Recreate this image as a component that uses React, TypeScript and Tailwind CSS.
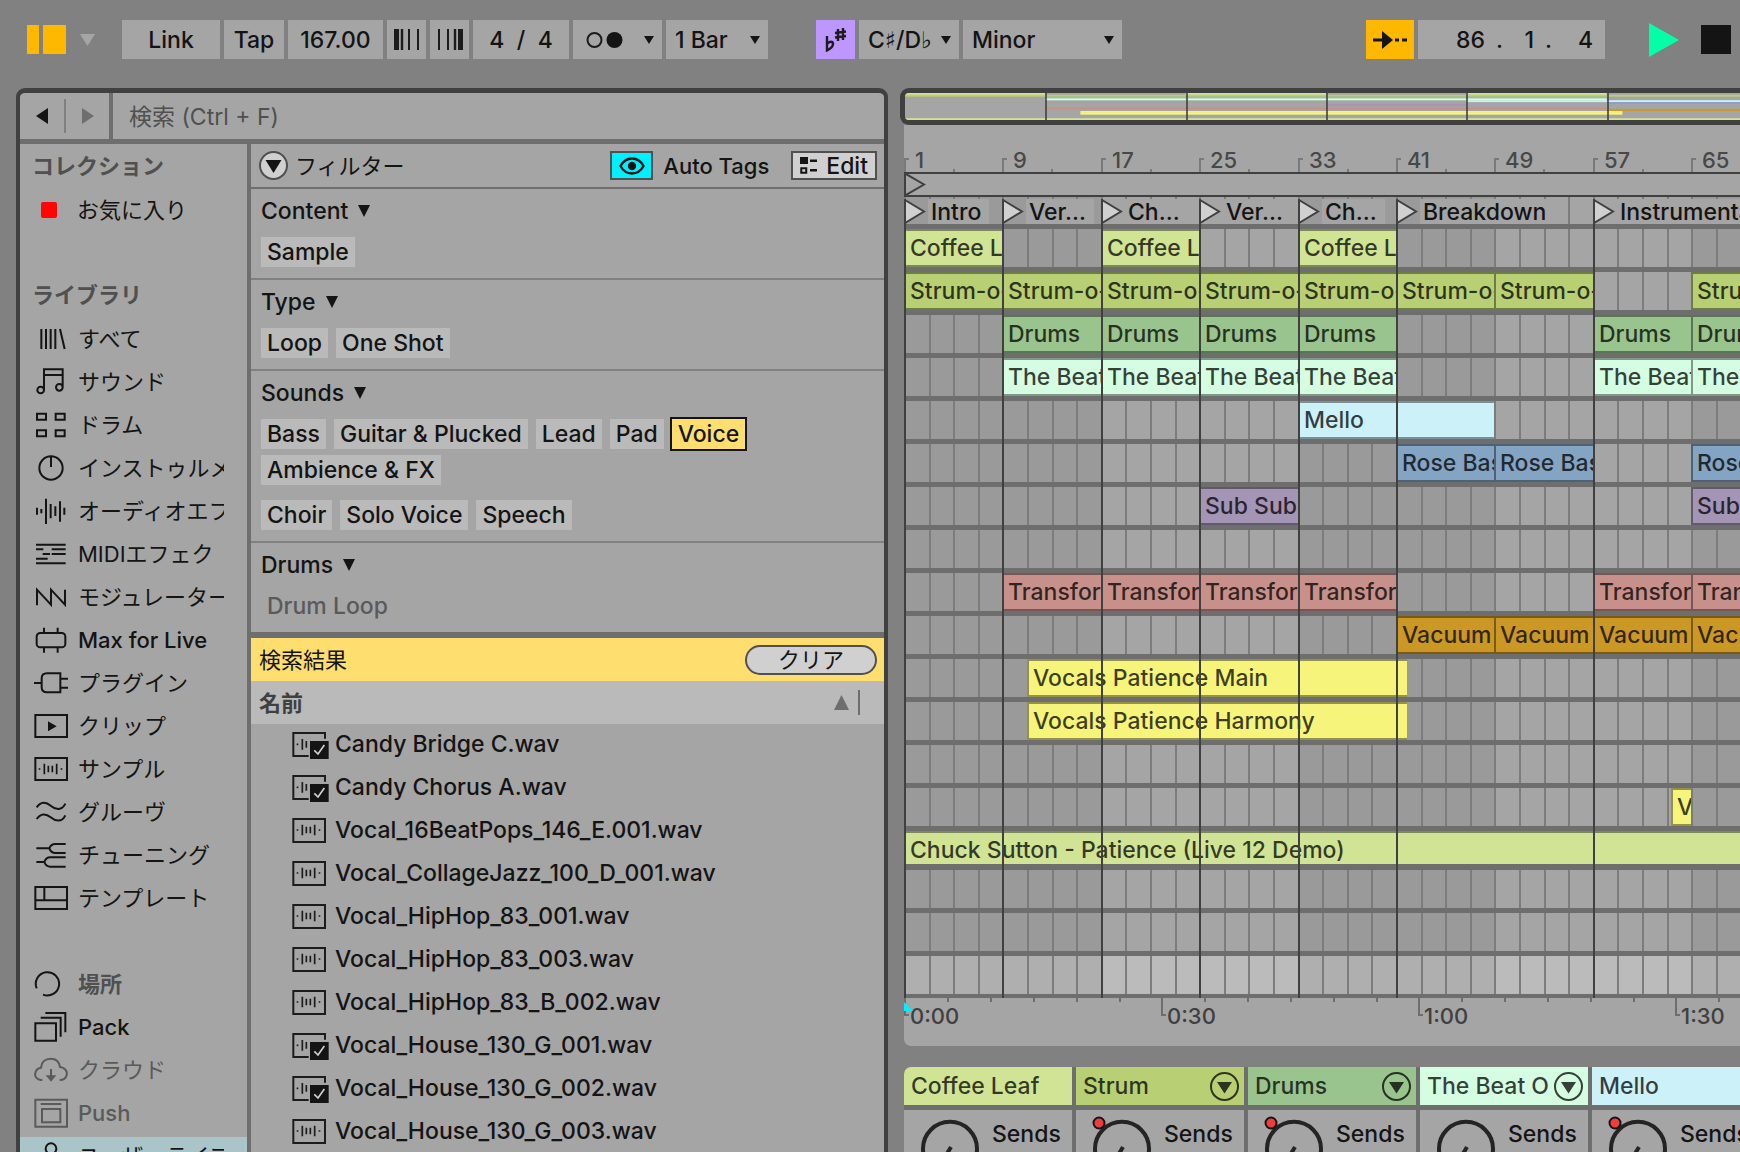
import { useState } from 'react';
import type { ReactNode } from 'react';

const FONT = "font-['Inter','DejaVu_Sans','Noto_Sans_CJK_JP',sans-serif] font-medium";

// 8 bars are about 98px wide in the arrangement
const PX_PER_BAR = 12.3;
const barX = (bar: number) => Math.round((bar - 1) * PX_PER_BAR);
const LAST_BAR = 161;

type Clip = { name: string; from: number; to: number; color: string };
type Track = { clips: Clip[]; kind?: 'short' | 'main' };

const repeat = (name: string, color: string, spans: [number, number][]): Clip[] =>
  spans.map(([from, to]) => ({ name, color, from, to }));

const TRACKS: Track[] = [
  { clips: repeat('Coffee Leaf', '#d1e496', [[1, 9], [17, 25], [33, 41]]) },
  { clips: repeat('Strum-o-matic', '#b9cf74', [[1, 9], [9, 17], [17, 25], [25, 33], [33, 41], [41, 49], [49, 57], [65, 73]]) },
  { clips: repeat('Drums', '#9ac48d', [[9, 17], [17, 25], [25, 33], [33, 41], [57, 65], [65, 73]]) },
  { clips: repeat('The Beat Of', '#d4fde1', [[9, 17], [17, 25], [25, 33], [33, 41], [57, 65], [65, 73]]) },
  { clips: repeat('Mello', '#cdf1f8', [[33, 49]]) },
  { clips: repeat('Rose Bass', '#84a4c3', [[41, 49], [49, 57], [65, 73]]) },
  { clips: repeat('Sub Sub', '#a494b6', [[25, 33], [65, 73]]) },
  { clips: [] },
  { clips: repeat('Transformer', '#c8908a', [[9, 17], [17, 25], [25, 33], [33, 41], [57, 65], [65, 73]]) },
  { clips: repeat('Vacuum', '#cb9826', [[41, 49], [49, 57], [57, 65], [65, 73]]) },
  { clips: repeat('Vocals Patience Main', '#f7f47c', [[11, 41.9]]) },
  { clips: repeat('Vocals Patience Harmony', '#f7f47c', [[11, 41.9]]) },
  { clips: [] },
  { clips: repeat('Vocals', '#f7f47c', [[63.35, 65]]) },
  { clips: repeat('Chuck Sutton - Patience (Live 12 Demo)', '#d1e496', [[1, LAST_BAR]]), kind: 'short' },
  { clips: [] },
  { clips: [] },
  { clips: [], kind: 'main' },
];

const LOCATORS = [
  { bar: 1, name: 'Intro' },
  { bar: 9, name: 'Ver...' },
  { bar: 17, name: 'Ch...' },
  { bar: 25, name: 'Ver...' },
  { bar: 33, name: 'Ch...' },
  { bar: 41, name: 'Breakdown' },
  { bar: 57, name: 'Instrumental' },
];

const FILES = [
  { name: 'Candy Bridge C.wav', checked: true },
  { name: 'Candy Chorus A.wav', checked: true },
  { name: 'Vocal_16BeatPops_146_E.001.wav' },
  { name: 'Vocal_CollageJazz_100_D_001.wav' },
  { name: 'Vocal_HipHop_83_001.wav' },
  { name: 'Vocal_HipHop_83_003.wav' },
  { name: 'Vocal_HipHop_83_B_002.wav' },
  { name: 'Vocal_House_130_G_001.wav', checked: true },
  { name: 'Vocal_House_130_G_002.wav', checked: true },
  { name: 'Vocal_House_130_G_003.wav' },
];

const CHANNELS = [
  { name: 'Coffee Leaf', color: '#d1e496' },
  { name: 'Strum', color: '#b9cf74', group: true, automated: true },
  { name: 'Drums', color: '#9ac48d', group: true, automated: true },
  { name: 'The Beat O', color: '#d4fde1', group: true },
  { name: 'Mello', color: '#cdf1f8', automated: true },
];

const WAVE_BARS = (
  <>
    <path d="M31 29V61M43 35V55M55 35V55M68 29V61" strokeWidth="5" />
    <path d="M14 45h5M80 45h5" strokeWidth="5" />
  </>
);

const ICONS: Record<string, ReactNode> = {
  all: <path d="M22 15V75M36 15V75M50 15V75M64 15V75M78 15L92 75" />,
  sounds: <path d="M30 69V7H86V61M30 24H86M30 69a10 10 0 1 1-20 0a10 10 0 1 1 20 0M86 61a10 10 0 1 1-20 0a10 10 0 1 1 20 0" />,
  drums: <path d="M9 11H36V29H9ZM65 11H92V29H65ZM9 61H36V79H9ZM65 61H92V79H65Z" />,
  instruments: (
    <>
      <circle cx="51" cy="45" r="35" />
      <path d="M51 10V42" />
    </>
  ),
  audio: <path d="M9 35V56M22 39V52M36 8V84M50 24V67M64 31V60M78 16V77M91 35V56" />,
  midi: <path d="M6 17H95M6 31H28M53 31H95M26 45H48M53 45H95M6 59H41M6 73H95" />,
  mod: <path d="M9 70V23L51 68V23L93 68V23" />,
  max: (
    <>
      <rect x="8" y="24" width="86" height="43" rx="11" />
      <path d="M30 8V24M71 8V24M30 67V83M71 67V83" />
    </>
  ),
  plugin: <path d="M0 45H23M79 16H39q-16 0-16 15V58q0 15 16 15H79ZM79 32H102M79 59H102" />,
  clip: (
    <>
      <rect x="4" y="12" width="95" height="66" />
      <path d="M42 31L68 46L42 61Z" fill="currentColor" stroke="none" />
    </>
  ),
  sample: (
    <>
      <rect x="4" y="12" width="95" height="66" />
      {WAVE_BARS}
    </>
  ),
  groove: <path d="M8 31C20 13 36 14 50 26S84 42 94 20M8 66C20 48 36 49 50 61S84 77 94 55" />,
  tuning: <path d="M7 25H46C50 14 56 12 64 12H95M46 25C50 36 56 39 64 39H95M7 66H31C35 55 41 52 49 52H95M31 66C35 77 41 80 49 80H95" />,
  template: <path d="M4 12H99V78H4ZM4 52H99M31 12V52" />,
  places: <path d="M8 58A35 35 0 1 1 27 77" />,
  pack: <path d="M4 34H66V86H4ZM20 17H80V74M34 3H94V61" />,
  cloud: (
    <>
      <path d="M25 75H20C8 73 1 64 4 54C6 44 13 39 21 38C22 21 34 11 50 11C67 11 76 22 78 36C92 38 101 48 98 60C96 70 88 75 77 75" />
      <path d="M51 42V66" />
      <path d="M35 61H67L51 80Z" fill="currentColor" stroke="none" />
    </>
  ),
  push: <path d="M4 5H99V86H4ZM20 18H82M24 33H79V73H24Z" />,
  user: <path d="M67 23a16 16 0 1 1-32 0a16 16 0 1 1 32 0M14 86C18 60 34 50 51 50S84 60 88 86" />,
};

function Icon({ name }: { name: string }) {
  return (
    <svg width="34" height="30" viewBox="0 0 102 90" fill="none" stroke="currentColor" strokeWidth="6" className="shrink-0" aria-hidden="true">
      {ICONS[name]}
    </svg>
  );
}

function FileIcon({ checked }: { checked?: boolean }) {
  return (
    <svg width="38" height="30" viewBox="0 0 114 90" fill="none" stroke="#1c1c1c" strokeWidth="6" className="shrink-0" aria-hidden="true">
      {checked ? (
        <>
          <path d="M50 81H4V12H99V29" />
          <path d="M31 30V62M43 36V56" strokeWidth="5" />
          <path d="M14 46h5" strokeWidth="5" />
          <rect x="54" y="36" width="56" height="54" fill="#141414" stroke="none" />
          <path d="M67 64L78 75L97 48" stroke="#d0d0d0" strokeWidth="5" />
        </>
      ) : (
        <>
          <rect x="4" y="12" width="95" height="69" />
          {WAVE_BARS}
        </>
      )}
    </svg>
  );
}

// Small drop-down arrow of the toolbar boxes
function Down({ className = '' }: { className?: string }) {
  return (
    <svg width="10" height="8" viewBox="0 0 10 8" className={`shrink-0 ${className}`} aria-hidden="true">
      <path d="M0 0H10L5 8Z" fill="currentColor" />
    </svg>
  );
}

function ToolSelect({ label, value, className }: { label: string; value: string; className: string }) {
  return (
    <div className={`relative h-full ${className}`}>
      <select aria-label={label} className="h-full w-full appearance-none bg-[#a5a5a5] pl-[9px] text-[#141414] outline-none">
        <option>{value}</option>
      </select>
      <Down className="pointer-events-none absolute top-[16px] right-[8px]" />
    </div>
  );
}

function Toolbar() {
  const box = 'flex h-full items-center justify-center bg-[#a5a5a5]';
  return (
    <header className="flex h-[88px] shrink-0 items-start overflow-hidden pt-5 pr-[9px] pl-[27px]">
      <div className="flex h-[39px] shrink-0 items-center">
        <button aria-label="Browser" className="flex h-[29px] gap-1">
          <span className="h-full w-3 bg-[#ffb802]" />
          <span className="h-full w-[23px] bg-[#ffb802]" />
        </button>
        <button aria-label="View menu" className="ml-[14px] text-[#a5a5a5]">
          <svg width="15" height="12" viewBox="0 0 15 12"><path d="M0 0H15L7.5 12Z" fill="currentColor" /></svg>
        </button>
      </div>

      <div className="ml-[27px] flex h-[39px] shrink-0 gap-1">
        <button className={`${box} w-[98px]`}>Link</button>
        <button className={`${box} w-[60px]`}>Tap</button>
        <input aria-label="Tempo" defaultValue="167.00" className="h-full w-[95px] bg-[#a5a5a5] text-center outline-none" />
        <button aria-label="Nudge down" className={`${box} w-[39px]`}>
          <svg width="26" height="21" viewBox="0 0 26 21" stroke="#1c1c1c"><path d="M2.5 0V21" strokeWidth="5" /><path d="M8 0V21" strokeWidth="2.4" /><path d="M15 0V21M24 0V21" strokeWidth="2" /></svg>
        </button>
        <button aria-label="Nudge up" className={`${box} w-[39px]`}>
          <svg width="26" height="21" viewBox="0 0 26 21" stroke="#1c1c1c"><path d="M23.5 0V21" strokeWidth="5" /><path d="M18 0V21" strokeWidth="2.4" /><path d="M11 0V21M2 0V21" strokeWidth="2" /></svg>
        </button>
        <div className={`${box} w-[96px] gap-[10px]`}>
          <input aria-label="Numerator" defaultValue="4" className="w-5 text-center outline-none" />
          <span>/</span>
          <input aria-label="Denominator" defaultValue="4" className="w-5 text-center outline-none" />
        </div>
        <button aria-label="Metronome" className={`${box} w-[89px] gap-[21px] pl-1`}>
          <svg width="37" height="18" viewBox="0 0 37 18"><circle cx="8.5" cy="9" r="7" fill="none" stroke="#1c1c1c" strokeWidth="2" /><circle cx="28.5" cy="9" r="8" fill="#141414" /></svg>
          <Down />
        </button>
        <ToolSelect label="Quantization" value="1 Bar" className="w-[102px]" />
      </div>

      <div className="ml-12 flex h-[39px] shrink-0 gap-1">
        <button aria-label="Scale mode" className="flex h-full w-[39px] items-center justify-center bg-[#bd97ff]">
          <svg width="22" height="24" viewBox="0 0 22 24" fill="none" stroke="#1c1c1c" strokeWidth="2.4">
            <path d="M2 8V22.500C5 21 8 18.500 8 16C8 13 4 13 2 16" />
            <path d="M13 1V13M18 0V12M10 5L21 3.500M10 9.500L21 8" />
          </svg>
        </button>
        <ToolSelect label="Root note" value="C♯/D♭" className="w-[100px]" />
        <ToolSelect label="Scale" value="Minor" className="w-[159px]" />
      </div>

      <div className="ml-auto flex h-[39px] shrink-0 items-center gap-1">
        <button aria-label="Follow" className="flex h-full w-12 items-center justify-center bg-[#ffb802]">
          <svg width="34" height="18" viewBox="0 0 34 18" stroke="#141414" strokeWidth="3"><path d="M0 9H10M22 9H26M29 9H34" /><path d="M9 0L20 9L9 18Z" fill="#141414" stroke="none" /></svg>
        </button>
        <div className={`${box} w-[187px] justify-end gap-[11px] pr-3`}>
          <input aria-label="Bar" defaultValue="86" className="w-10 text-right outline-none" />
          <span>.</span>
          <input aria-label="Beat" defaultValue="1" className="w-5 text-right outline-none" />
          <span>.</span>
          <input aria-label="Sixteenth" defaultValue="4" className="w-[30px] text-right outline-none" />
        </div>
        <button aria-label="Play" className="ml-10">
          <svg width="30" height="34" viewBox="0 0 30 34"><path d="M0 0L30 17L0 34Z" fill="#03ffa8" /></svg>
        </button>
        <button aria-label="Stop" className="ml-[18px] h-[29px] w-[30px] bg-[#141414]" />
      </div>
    </header>
  );
}

function SideRow({ icon, label, dim, selected, latin }: { icon: string; label: string; dim?: boolean; selected?: boolean; latin?: boolean }) {
  return (
    <li>
      <button
        className={`flex h-[43px] w-full items-center gap-[10px] pr-[23px] pb-[6px] pl-[14px] text-left ${latin ? 'font-medium' : 'font-normal'} ${selected ? 'bg-[#a9c5c9]' : ''} ${dim ? 'text-[#5a5a5a]' : 'text-[#141414]'}`}
      >
        <Icon name={icon} />
        <span className="min-w-0 flex-1 overflow-hidden whitespace-nowrap">{label}</span>
      </button>
    </li>
  );
}

function Sidebar() {
  const heading = 'h-[43px] pb-[6px] pl-3 font-bold leading-[37px] text-[#505050]';
  return (
    <nav className="w-[231px] shrink-0 overflow-hidden border-r-4 border-[#6e6e6e] pt-1 text-[22px]">
      <h2 className={heading}>コレクション</h2>
      <button className="flex h-[43px] w-full items-center gap-5 pb-[6px] pl-[21px] font-normal">
        <span className="h-4 w-4 rounded-[2px] bg-[#ff0505]" />
        お気に入り
      </button>
      <h2 className={`${heading} mt-[43px]`}>ライブラリ</h2>
      <ul>
        <SideRow icon="all" label="すべて" />
        <SideRow icon="sounds" label="サウンド" />
        <SideRow icon="drums" label="ドラム" />
        <SideRow icon="instruments" label="インストゥルメント" />
        <SideRow icon="audio" label="オーディオエフェクト" />
        <SideRow icon="midi" label="MIDIエフェク" />
        <SideRow icon="mod" label="モジュレーター" />
        <SideRow icon="max" label="Max for Live" latin />
        <SideRow icon="plugin" label="プラグイン" />
        <SideRow icon="clip" label="クリップ" />
        <SideRow icon="sample" label="サンプル" />
        <SideRow icon="groove" label="グルーヴ" />
        <SideRow icon="tuning" label="チューニング" />
        <SideRow icon="template" label="テンプレート" />
      </ul>
      <h2 className="mt-[43px] flex h-[43px] items-center gap-[10px] pb-[6px] pl-[14px] text-[#141414]">
        <Icon name="places" />
        <span className="font-bold text-[#505050]">場所</span>
      </h2>
      <ul>
        <SideRow icon="pack" label="Pack" latin />
        <SideRow icon="cloud" label="クラウド" dim />
        <SideRow icon="push" label="Push" dim latin />
        <SideRow icon="user" label="ユーザーライブラリ" selected />
      </ul>
    </nav>
  );
}

function Tag({ label, active, onClick }: { label: string; active?: boolean; onClick?: () => void }) {
  return (
    <button
      aria-pressed={!!active}
      onClick={onClick}
      className={`h-[30px] px-[6px] leading-[30px] text-[#141414] ${active ? 'bg-[#ffde70] outline-2 outline-[#141414]' : 'bg-[#bababa]'}`}
    >
      {label}
    </button>
  );
}

function SectionTitle({ children }: { children: ReactNode }) {
  return (
    <h3 className="mb-[14px] flex h-6 items-center gap-[10px]">
      {children}
      <svg width="12" height="12" viewBox="0 0 12 12" className="shrink-0" aria-hidden="true">
        <path d="M0 0H12L6 12Z" fill="currentColor" />
      </svg>
    </h3>
  );
}

function FilterSection({ title, children }: { title: string; children: ReactNode }) {
  return (
    <section className="border-b-2 border-[#808080] pt-[10px] pb-[11px] pl-[10px]">
      <SectionTitle>{title}</SectionTitle>
      {children}
    </section>
  );
}

const TAG_ROW = 'flex flex-wrap gap-x-2 gap-y-[6px]';

function Filters() {
  const [voice, setVoice] = useState(true);
  return (
    <>
      <div className="flex h-[45px] items-center border-b-2 border-[#6e6e6e] pr-[7px] pl-2">
        <button aria-label="Toggle filters">
          <svg width="29" height="29" viewBox="0 0 29 29">
            <circle cx="14.5" cy="14.5" r="13.5" fill="#d0d0d0" stroke="#505050" strokeWidth="2" />
            <path d="M6.500 9H22.500L14.500 22Z" fill="#141414" />
          </svg>
        </button>
        <span className="ml-[7px] text-[22px] font-normal">フィルター</span>
        <button aria-label="Show auto tags" className="ml-auto flex h-[29px] w-[43px] items-center justify-center border-2 border-[#505050] bg-[#00f0ff]">
          <svg width="26" height="18" viewBox="0 0 26 18" fill="none" stroke="#141414" strokeWidth="2.4">
            <path d="M1.500 9C7 -1 19 -1 24.500 9C19 19 7 19 1.500 9Z" />
            <circle cx="13" cy="9" r="3" fill="#141414" />
          </svg>
        </button>
        <span className="ml-[10px] text-[22px]">Auto Tags</span>
        <button className="ml-[22px] flex h-[29px] items-center gap-[9px] border-2 border-[#505050] bg-[#d0d0d0] px-[7px]">
          <svg width="17" height="17" viewBox="0 0 17 17">
            <path d="M0 0H8V7H0ZM10 2.500H17V5H10ZM10 12H17V14.500H10Z" fill="#141414" />
            <rect x="1.250" y="11.250" width="5" height="4.500" fill="none" stroke="#141414" strokeWidth="2" />
          </svg>
          Edit
        </button>
      </div>

      <FilterSection title="Content">
        <div className={TAG_ROW}><Tag label="Sample" /></div>
      </FilterSection>
      <FilterSection title="Type">
        <div className={TAG_ROW}><Tag label="Loop" /><Tag label="One Shot" /></div>
      </FilterSection>
      <FilterSection title="Sounds">
        <div className={`${TAG_ROW} pr-20`}>
          <Tag label="Bass" />
          <Tag label="Guitar & Plucked" />
          <Tag label="Lead" />
          <Tag label="Pad" />
          <Tag label="Voice" active={voice} onClick={() => setVoice(!voice)} />
          <Tag label="Ambience & FX" />
        </div>
        <div className={`${TAG_ROW} mt-[15px]`}>
          <Tag label="Choir" />
          <Tag label="Solo Voice" />
          <Tag label="Speech" />
        </div>
      </FilterSection>
      <section className="border-b-[6px] border-[#6e6e6e] pt-[10px] pb-[11px] pl-[10px]">
        <SectionTitle>Drums</SectionTitle>
        <button className="block h-[30px] px-[6px] leading-[30px] text-[#5a5a5a]">Drum Loop</button>
      </section>
    </>
  );
}

function Browser() {
  return (
    <div className="flex min-h-0 min-w-0 flex-col overflow-hidden rounded-t-[9px] border-4 border-t-[5px] border-b-0 border-[#404040] bg-[#a5a5a5]">
      <div className="flex h-[51px] shrink-0 border-b-[5px] border-[#6e6e6e]">
        <div className="flex w-[93px] shrink-0 items-center justify-center gap-4 border-r-4 border-[#6e6e6e]">
          <button aria-label="Back">
            <svg width="12" height="16" viewBox="0 0 12 16"><path d="M12 0V16L0 8Z" fill="#141414" /></svg>
          </button>
          <span className="h-[34px] w-[2px] bg-[#808080]" />
          <button aria-label="Forward">
            <svg width="12" height="16" viewBox="0 0 12 16"><path d="M0 0V16L12 8Z" fill="#6e6e6e" /></svg>
          </button>
        </div>
        <input aria-label="検索" placeholder="検索 (Ctrl + F)" className="min-w-0 flex-1 pt-px pl-4 font-normal outline-none placeholder:text-[#505050]" />
      </div>

      <div className="flex min-h-0 flex-1">
        <Sidebar />
        <div className="min-w-0 flex-1 overflow-hidden">
          <Filters />
          <div className="flex h-[43px] items-center justify-between bg-[#ffde70] pr-[7px] pl-2 text-[22px] font-normal">
            <span>検索結果</span>
            <button className="h-[30px] w-[132px] rounded-full border-2 border-[#505050] bg-[#d0d0d0] leading-[26px]">クリア</button>
          </div>
          <table className="w-full border-collapse">
            <thead>
              <tr className="bg-[#bababa]">
                <th className="h-[43px] pr-6 pl-2">
                  <button className="flex w-full items-center text-left text-[22px] font-bold text-[#404040]">
                    名前
                    <svg width="15" height="15" viewBox="0 0 15 15" className="ml-auto"><path d="M7.500 0L15 15H0Z" fill="#6e6e6e" /></svg>
                    <span className="ml-[9px] h-[25px] w-[2px] bg-[#6e6e6e]" />
                  </button>
                </th>
              </tr>
            </thead>
            <tbody>
              {FILES.map(f => (
                <tr key={f.name}>
                  <td className="h-[43px] pt-[6px] pl-[41px] align-top">
                    <div className="flex h-7 items-center gap-[5px]">
                      <FileIcon checked={f.checked} />
                      {f.name}
                    </div>
                  </td>
                </tr>
              ))}
            </tbody>
          </table>
        </div>
      </div>
    </div>
  );
}

function Overview() {
  const scale = 17.54;
  return (
    <div className="h-[37px] shrink-0 overflow-hidden rounded-l-[9px] border-[5px] border-r-0 border-[#404040] bg-[#a5a5a5]">
      <svg width="100%" height="27" aria-hidden="true">
        {TRACKS.slice(0, 15).map((t, i) =>
          t.clips.map(c => (
            <rect key={`${i}-${c.from}`} x={(c.from - 1) * scale} y={i * 1.8} width={(c.to - c.from) * scale} height="1.9" fill={c.color} />
          )),
        )}
        {[9, 17, 25, 33, 41, 49, 57].map(b => (
          <rect key={b} x={Math.round((b - 1) * scale)} y="0" width="2" height="27" fill="#404040" fillOpacity="0.8" />
        ))}
      </svg>
    </div>
  );
}

// Two-bar cells, alternating shade every 16 bars
function GridCells({ main }: { main?: boolean }) {
  const cells: ReactNode[] = [];
  for (let bar = 1; bar < LAST_BAR; bar += 2) {
    const dark = Math.floor((bar - 1) / 16) % 2 === 0;
    const shade = main ? (dark ? 'bg-[#afafaf]' : 'bg-[#bbbbbb]') : dark ? 'bg-[#9a9a9a]' : 'bg-[#a5a5a5]';
    cells.push(
      <span key={bar} className={`h-full shrink-0 border-l-2 border-[#7c7c7c] ${shade}`} style={{ width: barX(bar + 2) - barX(bar) }} />,
    );
  }
  return <div className="flex h-full">{cells}</div>;
}

function TrackRow({ track }: { track: Track }) {
  const short = track.kind === 'short';
  return (
    <div className={`relative overflow-hidden border-[#6e6e6e] ${short ? 'h-[39px] border-b-[6px]' : track.kind === 'main' ? 'h-[42px] border-b-4' : 'h-[43px] border-b-[5px]'}`}>
      <GridCells main={track.kind === 'main'} />
      {track.clips.map(c => (
        <div
          key={c.from}
          className={`absolute inset-y-0 overflow-hidden border-t-2 border-l-2 border-black/40 pl-1 leading-[35px] whitespace-nowrap text-black/75 ${short ? '' : 'border-b-2'}`}
          style={{ left: barX(c.from), width: barX(c.to) - barX(c.from), backgroundColor: c.color }}
        >
          {c.name}
        </div>
      ))}
    </div>
  );
}

function Ruler() {
  const marks: number[] = [];
  for (let b = 1; b < LAST_BAR; b += 8) marks.push(b);
  return (
    <div className="flex h-[47px] items-end overflow-hidden text-[22px] text-[#484848]">
      {marks.map(b => (
        <div key={b} className="flex h-[26px] shrink-0 items-end" style={{ width: barX(b + 8) - barX(b) }}>
          <span className="h-[14px] w-[5px] border-t-2 border-l-2 border-[#7a7a7a]" />
          <span className="w-11 pl-[6px] leading-6">{b}</span>
          <span className="h-[3px] w-[2px] bg-[#7a7a7a]" />
        </div>
      ))}
    </div>
  );
}

function TimeRuler() {
  const labels = ['0:00', '0:30', '1:00', '1:30', '2:00', '2:30', '3:00'];
  return (
    <div className="relative flex h-12 overflow-hidden text-[22px] text-[#404040]">
      {labels.map(t => (
        <div key={t} className="h-full w-[257px] shrink-0">
          <div className="flex">
            {[0, 1, 2, 3, 4, 5].map(n => (
              <span key={n} className="h-1 w-[43px] shrink-0 border-l-2 border-[#6e6e6e]" />
            ))}
          </div>
          <div className="flex h-7 items-start">
            <span className="h-[14px] w-[5px] border-b-2 border-l-2 border-[#6e6e6e]" />
            <span className="pl-px leading-7">{t}</span>
          </div>
        </div>
      ))}
      <svg width="9" height="9" viewBox="0 0 9 9" className="absolute top-1 left-0"><path d="M0 0L9 9H0Z" fill="#00f0ff" /></svg>
    </div>
  );
}

function Arrangement() {
  return (
    <div className="relative ml-1 shrink-0 overflow-hidden rounded-bl-[7px] bg-[#a5a5a5]">
      <Ruler />
      <div className="h-[25px] border-y-2 border-l-2 border-[#404040]">
        <svg width="20" height="21" viewBox="0 0 20 21" fill="none" stroke="#404040" strokeWidth="2"><path d="M0 0L18 10.500L0 21" /></svg>
      </div>
      <div className="relative h-8 overflow-hidden border-b-[5px] border-[#6e6e6e]">
        <GridCells />
        {LOCATORS.map(l => (
          <div key={l.bar} className="absolute top-[2px] bottom-0 flex" style={{ left: barX(l.bar) }}>
            <svg width="24" height="25" viewBox="0 0 24 25"><path d="M1 1L20 12.500L1 24Z" fill="#d0d0d0" stroke="#404040" strokeWidth="2" /></svg>
            <span className="bg-[#a5a5a5] pr-2 pl-[3px] leading-[27px]">{l.name}</span>
          </div>
        ))}
      </div>
      {TRACKS.map((t, i) => <TrackRow key={i} track={t} />)}
      <TimeRuler />
      {/* Locator lines run over the clips */}
      {LOCATORS.map(l => (
        <span key={l.bar} className="pointer-events-none absolute top-[74px] bottom-12 w-[2px] bg-[#404040]" style={{ left: barX(l.bar) }} />
      ))}
    </div>
  );
}

function Mixer() {
  return (
    <div className="mt-[21px] ml-1 flex min-h-0 flex-1 gap-1 overflow-hidden rounded-tl-[7px] bg-[#6e6e6e]">
      {CHANNELS.map(c => (
        <div key={c.name} className="flex w-[168px] shrink-0 flex-col">
          <div className="flex h-[38px] shrink-0 items-center justify-between pr-[5px] pl-[7px] text-black/75" style={{ backgroundColor: c.color }}>
            <span className="whitespace-nowrap">{c.name}</span>
            {c.group && (
              <button aria-label={`Unfold ${c.name}`}>
                <svg width="29" height="29" viewBox="0 0 29 29">
                  <circle cx="14.5" cy="14.5" r="13.5" fill="none" stroke="currentColor" strokeWidth="2" />
                  <path d="M7 10H22L14.500 21.500Z" fill="currentColor" />
                </svg>
              </button>
            )}
          </div>
          <div className="mt-[5px] flex flex-1 items-start bg-[#a5a5a5]">
            <svg width="76" height="70" viewBox="0 0 76 70" className="shrink-0" aria-hidden="true">
              <path d="M27 58A27 27 0 1 1 65 58" fill="none" stroke="#242424" strokeWidth="4" />
              <path d="M47 37L32 62" stroke="#242424" strokeWidth="4" />
              {c.automated && <circle cx="23" cy="13" r="5.5" fill="#f03c3c" stroke="#141414" strokeWidth="2" />}
            </svg>
            <span className="pt-[10px] pl-3 leading-7">Sends</span>
          </div>
        </div>
      ))}
    </div>
  );
}

export default function App() {
  return (
    <div className={`flex h-screen flex-col overflow-hidden bg-[#818181] text-[23px] leading-[26px] text-[#141414] ${FONT}`}>
      <Toolbar />
      <main className="grid min-h-0 flex-1 grid-cols-[872fr_840fr] gap-3 pl-4">
        <Browser />
        <div className="flex min-h-0 min-w-0 flex-col overflow-hidden">
          <Overview />
          <Arrangement />
          <Mixer />
        </div>
      </main>
    </div>
  );
}
